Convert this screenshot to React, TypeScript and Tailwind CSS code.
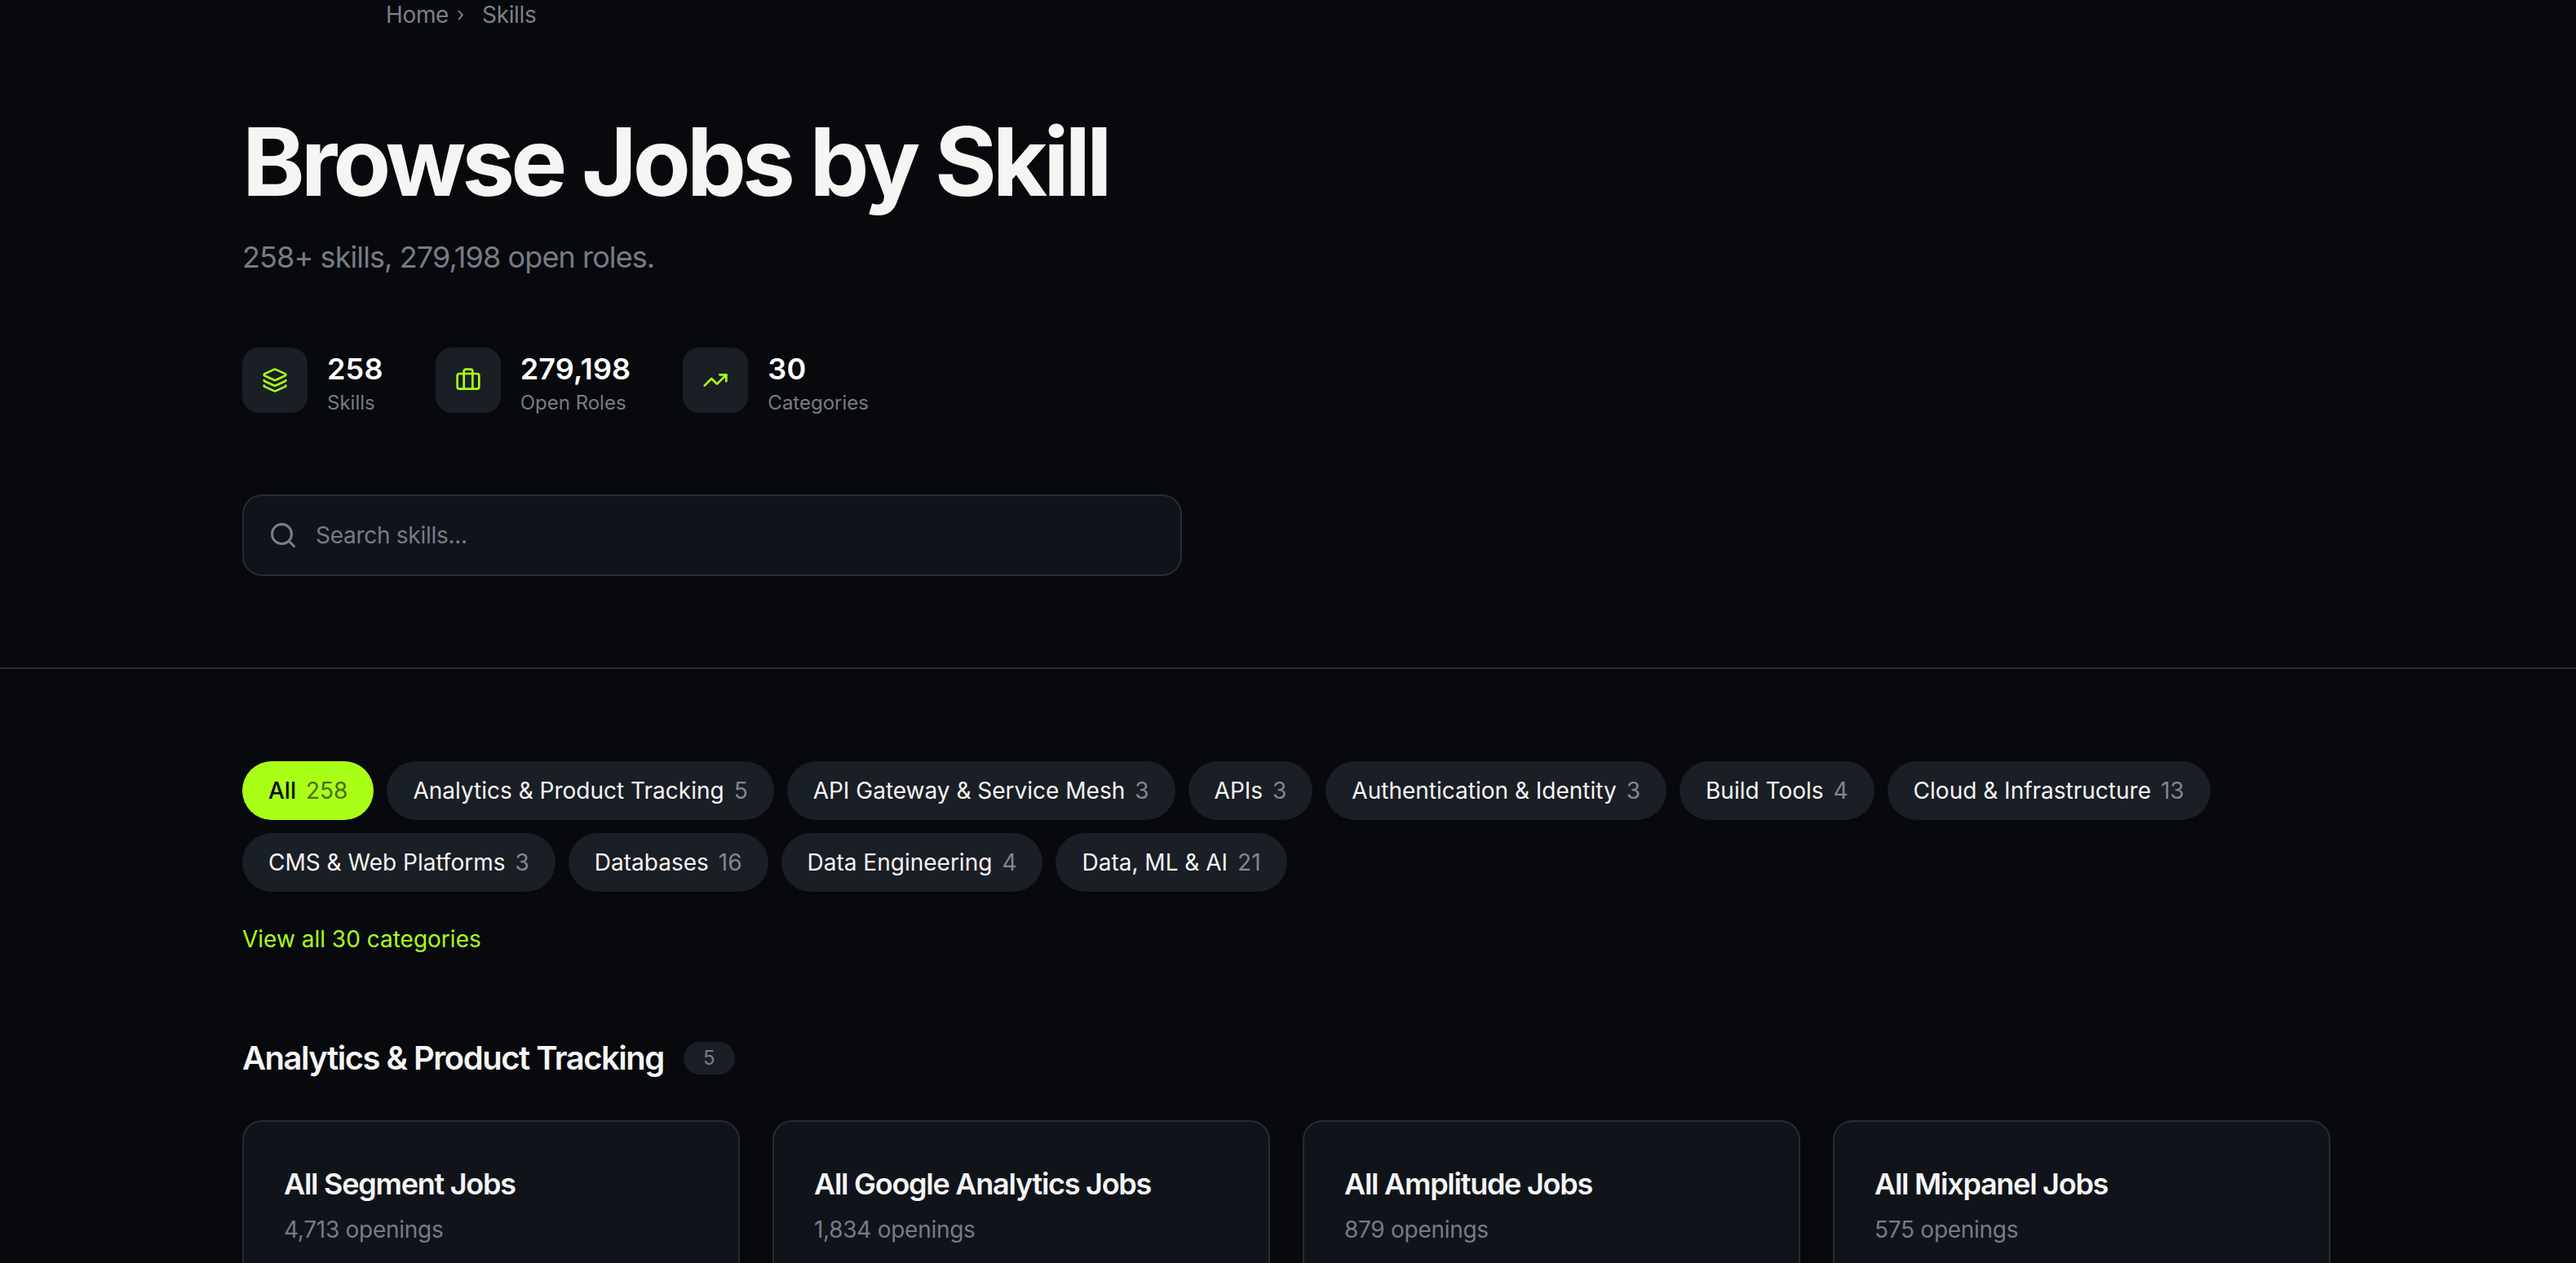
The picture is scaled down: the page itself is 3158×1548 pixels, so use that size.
import { Briefcase, Layers, Search, TrendingUp } from "lucide-react";

const stats = [
  { icon: Layers, value: "258", label: "Skills" },
  { icon: Briefcase, value: "279,198", label: "Open Roles" },
  { icon: TrendingUp, value: "30", label: "Categories" },
];

const categories = [
  { name: "Analytics & Product Tracking", count: 5 },
  { name: "API Gateway & Service Mesh", count: 3 },
  { name: "APIs", count: 3 },
  { name: "Authentication & Identity", count: 3 },
  { name: "Build Tools", count: 4 },
  { name: "Cloud & Infrastructure", count: 13 },
  { name: "CMS & Web Platforms", count: 3 },
  { name: "Databases", count: 16 },
  { name: "Data Engineering", count: 4 },
  { name: "Data, ML & AI", count: 21 },
];

const skills = [
  { title: "All Segment Jobs", openings: "4,713 openings" },
  { title: "All Google Analytics Jobs", openings: "1,834 openings" },
  { title: "All Amplitude Jobs", openings: "879 openings" },
  { title: "All Mixpanel Jobs", openings: "575 openings" },
];

export default function App() {
  return (
    <main className="h-[1548px] overflow-hidden bg-[#07090d] font-['Inter',sans-serif] text-[#f5f5f4]">
      <nav className="ml-[473px] flex h-[36px] items-center text-[28px] tracking-[-0.012em] text-[#7b7f88]">
        <a href="#">Home</a>
        <span className="ml-[10px] text-[24px]">›</span>
        <span className="ml-[22px]">Skills</span>
      </nav>

      <header className="border-b-2 border-[#2a2d33] pb-[112px] pl-[297px] pt-[90px]">
        <h1 className="text-[116px] font-bold leading-[144px] tracking-[-0.043em]">Browse Jobs by Skill</h1>
        <p className="mt-[18px] text-[36px] leading-[54px] tracking-[-0.025em] text-[#777b85]">258+ skills, 279,198 open roles.</p>

        <div className="mt-[82px] flex gap-[64px]">
          {stats.map((stat) => (
            <div key={stat.label} className="flex items-center gap-[24px]">
              <div className="flex size-[80px] items-center justify-center rounded-[20px] bg-[#1a1e25]">
                <stat.icon className="size-[32px] text-[#aaff17]" strokeWidth={2} />
              </div>
              <div>
                <div className="text-[36px] font-semibold leading-[56px] tracking-[0.005em] text-white">{stat.value}</div>
                <div className="text-[24px] leading-[28px] text-[#777b85]">{stat.label}</div>
              </div>
            </div>
          ))}
        </div>

        <div className="mt-[98px] flex h-[100px] w-[1152px] items-center gap-[22px] rounded-[24px] border-2 border-[#272b33] bg-[#10141a] px-[30px]">
          <Search className="size-[36px] shrink-0 text-[#7b7f88]" strokeWidth={2} />
          <input
            placeholder="Search skills..."
            className="w-full bg-transparent text-[28px] tracking-[-0.01em] outline-none placeholder:text-[#777b85]"
          />
        </div>
      </header>

      <section className="ml-[297px] w-[2560px] pt-[113px]">
        <div className="flex flex-wrap gap-[16px]">
          <button className="flex h-[72px] items-center gap-[12px] rounded-full bg-[#aaff17] px-[32px] text-[28px] font-medium text-[#07090d]">
            All <span className="font-normal text-[#4c6e12]">258</span>
          </button>
          {categories.map((category) => (
            <button
              key={category.name}
              className="flex h-[72px] items-center gap-[12px] rounded-full bg-[#1a1e25] px-[32px] text-[28px]"
            >
              {category.name} <span className="text-[#82868d]">{category.count}</span>
            </button>
          ))}
        </div>
        <a href="#" className="mt-[40px] block text-[28px] leading-[36px] text-[#aaff17]">
          View all 30 categories
        </a>

        <div className="mt-[100px] flex items-center gap-[24px]">
          <h2 className="text-[40px] font-semibold leading-[56px] tracking-[-0.0375em]">Analytics &amp; Product Tracking</h2>
          <span className="flex h-[40px] w-[63px] items-center justify-center rounded-full bg-[#1a1e25] text-[24px] text-[#777b85]">5</span>
        </div>

        <div className="mt-[48px] grid grid-cols-4 gap-[40px]">
          {skills.map((skill) => (
            <a key={skill.title} href="#" className="block h-[320px] rounded-[24px] border-2 border-[#272b33] bg-[#10141a] px-[49px] pt-[50px]">
              <h3 className="text-[36px] font-semibold leading-[52px] tracking-[-0.035em]">{skill.title}</h3>
              <p className="mt-[8px] text-[28px] leading-[44px] tracking-[-0.01em] text-[#777b85]">{skill.openings}</p>
            </a>
          ))}
        </div>
      </section>
    </main>
  );
}
